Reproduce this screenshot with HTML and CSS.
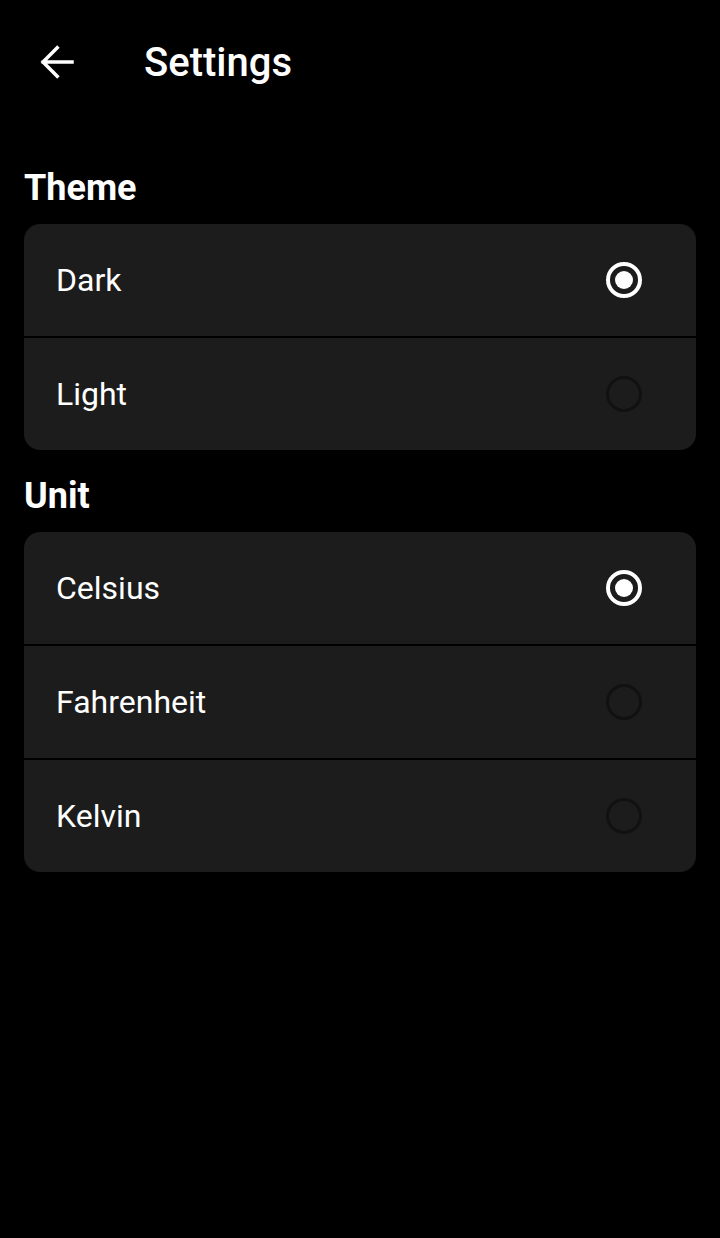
FILE: index.html
```html
<!DOCTYPE html>
<html lang="en">
<head>
<meta charset="utf-8">
<title>Settings</title>
<link rel="stylesheet" href="styles.css">
</head>
<body>
<div class="app">
  <header class="topbar">
    <button class="back" aria-label="Back">
      <svg viewBox="0 0 24 24" width="48" height="48"><path d="M20 12H5.6M12.6 4.9L5.5 12l7.1 7.1" fill="none" stroke="#fff" stroke-width="1.75" stroke-linecap="square"/></svg>
    </button>
    <h1 class="title">Settings</h1>
  </header>
  <main class="content">
    <section class="section">
      <h2 class="section-title">Theme</h2>
      <div class="card">
        <div class="row"><span class="label">Dark</span><span class="radio checked"></span></div>
        <div class="row"><span class="label">Light</span><span class="radio"></span></div>
      </div>
    </section>
    <section class="section">
      <h2 class="section-title">Unit</h2>
      <div class="card">
        <div class="row"><span class="label">Celsius</span><span class="radio checked"></span></div>
        <div class="row"><span class="label">Fahrenheit</span><span class="radio"></span></div>
        <div class="row"><span class="label">Kelvin</span><span class="radio"></span></div>
      </div>
    </section>
  </main>
</div>
</body>
</html>
```
FILE: styles.css
```css
* { box-sizing: border-box; }
html, body { margin: 0; padding: 0; background: #000; }
body { font-family: Roboto, "Noto Sans", sans-serif; color: #fff; }
.app { width: 720px; min-height: 1238px; background: #000; }
.topbar { height: 124px; display: flex; align-items: center; padding-left: 32px; }
.back { width: 48px; height: 48px; padding: 0; border: 0; background: none; display: flex; align-items: center; justify-content: center; }
.back svg { display: block; }
.title { margin: 2px 0 0 64px; font-size: 40px; font-weight: 500; line-height: 48px; }
.content { padding: 44px 24px 0; display: flex; flex-direction: column; gap: 24px; }
.section-title { margin: 0 0 16px; font-size: 36px; font-weight: 700; line-height: 40px; }
.section + .section .section-title { margin-top: 2px; margin-bottom: 16px; }
.card { background: #000; border-radius: 16px; overflow: hidden; display: flex; flex-direction: column; gap: 2px; }
.row { height: 112px; background: #1c1c1c; display: flex; align-items: center; justify-content: space-between; padding: 0 54px 0 32px; }
.label { font-size: 32px; line-height: 1; }
.radio { width: 36px; height: 36px; border-radius: 50%; border: 3px solid #111; }
.radio.checked { border: 4px solid #fff; position: relative; }
.radio.checked::after { content: ""; position: absolute; left: 50%; top: 50%; width: 18px; height: 18px; margin: -9px 0 0 -9px; border-radius: 50%; background: #fff; }
```
